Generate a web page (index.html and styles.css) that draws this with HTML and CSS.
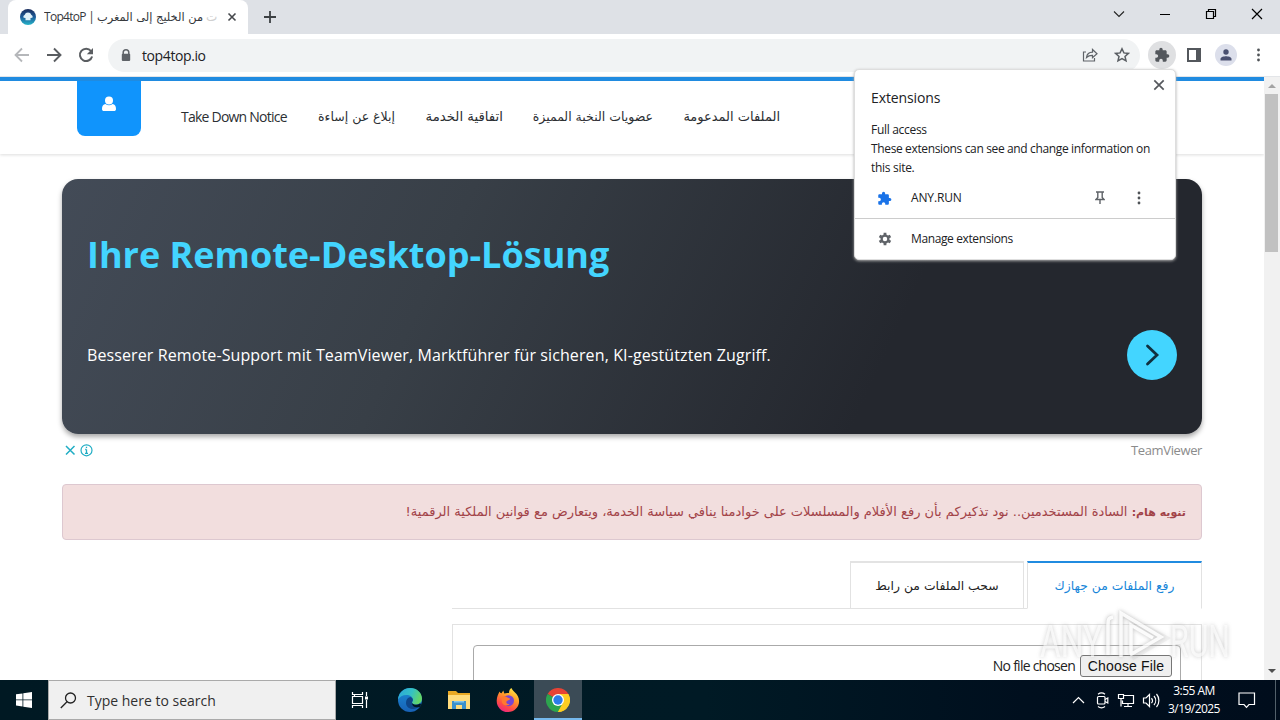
FILE: index.html
```html
<!DOCTYPE html>
<html lang="en">
<head>
<meta charset="utf-8">
<title>Top4toP</title>
<link rel="stylesheet" href="styles.css">
</head>
<body>
<div class="screen">
  <div class="tabstrip">
    <div class="tab">
      <svg class="favicon" width="16" height="16" viewBox="0 0 16 16"><defs><linearGradient id="fv" x1="0" y1="0" x2="0" y2="1"><stop offset="0" stop-color="#1b2c5c"/><stop offset=".5" stop-color="#1d5c9a"/><stop offset="1" stop-color="#27b5c9"/></linearGradient></defs><circle cx="8" cy="8" r="8" fill="url(#fv)"/><path d="M3.800 8.800a1.800 1.800 0 0 1 .8-2.900A3.600 3.600 0 0 1 11.400 5.900a1.800 1.800 0 0 1 .8 2.900L10.500 9v2.200h-5V9z" fill="#dff0f8"/></svg>
      <div class="tab-title"><span class="tab-latin">Top4toP |</span><span class="tab-arabic" dir="rtl">من الخليج إلى المغرب</span><span class="tab-fade">ت</span></div>
      <svg class="tab-close" width="10" height="10" viewBox="0 0 10 10"><path d="M1.500 1.500l7 7M8.500 1.500l-7 7" stroke="#45484c" stroke-width="1.600"/></svg>
    </div>
    <svg class="new-tab" width="12" height="12" viewBox="0 0 12 12"><path d="M6 0v12M0 6h12" stroke="#3c4043" stroke-width="1.800"/></svg>
    <div class="window-buttons">
      <svg width="46" height="28" viewBox="0 0 46 28"><path d="M18 11.500l5 5 5-5" fill="none" stroke="#222" stroke-width="1.100"/></svg>
      <svg width="46" height="28" viewBox="0 0 46 28"><path d="M18 14.500h10" stroke="#000"/></svg>
      <svg width="46" height="28" viewBox="0 0 46 28"><path d="M18.500 11.500h7v7h-7zM20.500 11.500v-2h7v7h-2" fill="none" stroke="#000" stroke-width="1.200"/></svg>
      <svg width="46" height="28" viewBox="0 0 46 28"><path d="M18 9l10 10M28 9L18 19" stroke="#000" stroke-width="1.200"/></svg>
    </div>
  </div>
  <div class="toolbar">
    <div class="nav-buttons">
      <svg width="16" height="16" viewBox="0 0 16 16"><path d="M15 8H2M8 1.500L1.500 8 8 14.500" fill="none" stroke="#b5b7ba" stroke-width="1.800"/></svg>
      <svg width="16" height="16" viewBox="0 0 16 16"><path d="M1 8h13M8 1.500L14.500 8 8 14.500" fill="none" stroke="#5a5d61" stroke-width="1.900"/></svg>
      <svg width="16" height="16" viewBox="0 0 16 16"><path d="M13 4a6.200 6.200 0 1 0 1.100 5.500" fill="none" stroke="#5a5d61" stroke-width="2"/><path d="M15 1v6.200H8.800z" fill="#5a5d61"/></svg>
    </div>
    <div class="omnibox">
      <svg class="lock" width="10" height="13" viewBox="0 0 10 13"><path d="M2.200 5V3.600a2.800 2.800 0 0 1 5.600 0V5" fill="none" stroke="#5f6368" stroke-width="1.500"/><rect x=".8" y="4.700" width="8.400" height="7.300" rx="1" fill="#5f6368"/></svg>
      <span class="url">top4top.io</span>
      <svg class="share" width="16" height="16" viewBox="0 0 16 16"><path d="M4 5H1.500v9h11v-3" fill="none" stroke="#5f6368" stroke-width="1.200"/><path d="M4.500 10.500C5 7 7 5.300 10.500 5.200V2.500L15 6.700l-4.500 4V8.300C8 8.200 6.200 8.800 4.500 10.500z" fill="none" stroke="#5f6368" stroke-width="1.200"/></svg>
      <svg class="star" width="16" height="16" viewBox="0 0 16 16"><path d="M8 1.800l1.900 4.100 4.500.5-3.400 3 1 4.400L8 11.500l-4 2.300 1-4.400-3.400-3 4.500-.5z" fill="none" stroke="#5a5e63" stroke-width="1.500"/></svg>
    </div>
    <div class="tools">
      <span class="round gray"><svg width="16" height="16" viewBox="0 0 24 24"><path fill="#53575c" d="M20.500 11H19V7c0-1.100-.9-2-2-2h-4V3.500a2.500 2.500 0 0 0-5 0V5H4c-1.100 0-2 .9-2 2v3.800h1.500a2.700 2.700 0 0 1 0 5.400H2V20c0 1.100.9 2 2 2h3.800v-1.500a2.700 2.700 0 0 1 5.400 0V22H17c1.100 0 2-.9 2-2v-4h1.500a2.500 2.500 0 0 0 0-5z"/></svg></span>
      <svg width="16" height="16" viewBox="0 0 16 16"><path d="M2 2h12v12H2z" fill="none" stroke="#53575c" stroke-width="2"/><path d="M10 2h4v12h-4z" fill="#53575c"/></svg>
      <span class="round small"><svg width="14" height="14" viewBox="0 0 14 14"><circle cx="7" cy="4" r="2.700" fill="#4a5070"/><path d="M1.500 12.500V11c0-2 3.500-2.700 5.500-2.700s5.500.7 5.500 2.700v1.500z" fill="#4a5070"/></svg></span>
      <svg width="6" height="16" viewBox="0 0 6 16"><g fill="#4f5357"><circle cx="2.500" cy="3" r="1.400"/><circle cx="2.500" cy="8" r="1.400"/><circle cx="2.500" cy="13" r="1.400"/></g></svg>
    </div>
  </div>

  <div class="viewport">
    <div class="page">
      <div class="header">
        <div class="user"><svg width="16" height="16" viewBox="0 0 16 16"><circle cx="8" cy="4.500" r="4" fill="#fff"/><path d="M1 13c0-3 1.200-4.600 3.500-5 2 1.600 5 1.600 7 0 2.300.4 3.500 2 3.500 5 0 1.400-.8 2-2 2H3c-1.200 0-2-.6-2-2z" fill="#fff"/></svg></div>
        <div class="menu">
          <span class="m m1">Take Down Notice</span>
          <span class="m m2" dir="rtl">إبلاغ عن إساءة</span>
          <span class="m m3" dir="rtl">اتفاقية الخدمة</span>
          <span class="m m4" dir="rtl">عضويات النخبة المميزة</span>
          <span class="m m5" dir="rtl">الملفات المدعومة</span>
        </div>
      </div>
      <div class="ad">
        <div class="ad-title">Ihre Remote-Desktop-Lösung</div>
        <div class="ad-row">
          <span class="ad-text">Besserer Remote-Support mit TeamViewer, Marktführer für sicheren, KI-gestützten Zugriff.</span>
          <span class="ad-go"><svg width="50" height="50" viewBox="0 0 50 50"><path d="M20.500 16l9.500 9-9.500 9" fill="none" stroke="#10303f" stroke-width="2.800" stroke-linecap="round"/></svg></span>
        </div>
      </div>
      <div class="ad-foot">
        <svg width="30" height="14" viewBox="0 0 30 14"><path d="M2 3l8.500 8.500M10.500 3L2 11.500" stroke="#20adc4" stroke-width="1.500"/><circle cx="22.500" cy="7.300" r="5.500" fill="none" stroke="#20adc4" stroke-width="1.200"/><path d="M22.500 6.500v4M21.200 6.500h1.300M21 10.300h3M22.500 3.800v1.300" stroke="#20adc4" stroke-width="1.300"/></svg>
        <span class="sponsor">TeamViewer</span>
      </div>
      <div class="notice" dir="rtl"><span class="notice-text"><b>تنويه هام:</b> السادة المستخدمين.. نود تذكيركم بأن رفع الأفلام والمسلسلات على خوادمنا ينافي سياسة الخدمة، ويتعارض مع قوانين الملكية الرقمية!</span></div>
      <div class="page-tabs" dir="rtl">
        <div class="ptab active"><span>رفع الملفات من جهازك</span></div>
        <div class="ptab"><span>سحب الملفات من رابط</span></div>
      </div>
      <div class="panel">
        <div class="filebox"><span class="nofile">No file chosen</span><span class="choose">Choose File</span></div>
      </div>
    </div>
    <div class="scrollbar">
      <svg width="16" height="17" viewBox="0 0 16 17"><path d="M4 11l4-4 4 4z" fill="#a3a3a3"/></svg>
      <div class="thumb"></div>
      <svg class="down" width="16" height="17" viewBox="0 0 16 17"><path d="M4 6l4 4 4-4z" fill="#505050"/></svg>
    </div>
  </div>

  <div class="taskbar">
    <div class="start"><svg width="16" height="16" viewBox="0 0 16 16"><path d="M0 2.300l6.500-.9v6.100H0zM7.300 1.300L16 0v7.500H7.300zM0 8.300h6.500v6.200L0 13.600zM7.300 8.300H16V16l-8.700-1.300z" fill="#fff"/></svg></div>
    <div class="search"><svg width="17" height="17" viewBox="0 0 17 17"><circle cx="10.500" cy="6" r="5" fill="none" stroke="#222" stroke-width="1.300"/><path d="M7 9.800L.8 16" stroke="#222" stroke-width="1.300"/></svg><span>Type here to search</span></div>
    <div class="app first"><svg width="18" height="16" viewBox="0 0 18 16"><path d="M1.500 0v2.500h10V0M3.500 2.500v2M1.500 4.500h10v7h-10zM1.500 16v-2.500h10V16M15.500 0v4M15.500 8v8" fill="none" stroke="#fff" stroke-width="1.200"/><rect x="14" y="4.500" width="3" height="3" fill="#fff"/></svg></div>
    <div class="app gap"><svg width="24" height="24" viewBox="0 0 24 24"><defs><linearGradient id="e1" x1="0" y1="0" x2="1" y2=".3"><stop offset="0" stop-color="#2aa6dc"/><stop offset=".6" stop-color="#35c1c4"/><stop offset="1" stop-color="#62d56a"/></linearGradient><linearGradient id="e2" x1="0" y1="0" x2="0" y2="1"><stop offset="0" stop-color="#1b8bd4"/><stop offset="1" stop-color="#1761b6"/></linearGradient></defs><circle cx="12" cy="12" r="12" fill="url(#e2)"/><path d="M0 11.500C.7 4.500 6 0 12.300 0 19 0 24 5 24 10.500c0 4-3 6.200-6.200 6.200-2.800 0-4.400-1.200-3.600-2.500.7-1 .7-1.700.7-2.500C14.800 9 12 7 8.500 7 4.500 7 1.500 9 0 11.500z" fill="url(#e1)"/><path d="M8 15c0-3 1.500-5.500 4.200-6 1.800.5 2.800 1.700 2.700 3-.1 1-1.500 1.800-.7 3.200 1 1.800 4.800 2.500 7.800.3 1 0 1 1 .3 2C20 20 17 21.500 14 21 10.500 20.500 8 18 8 15z" fill="#0e4689"/><path d="M14.200 15c1 2 5 2.600 8 .5l1 1.200-1.500 2.300c-4 1-8-.5-7.500-4z" fill="#001824"/></svg></div>
    <div class="app"><svg width="22" height="20" viewBox="0 0 22 20"><path d="M0 1h8l2 2h12v16H0z" fill="#e9a924"/><path d="M0 5h22v14H0z" fill="#ffdc7c"/><path d="M4 19v-8h14v8h-4v-4H8v4z" fill="#3b91cc"/><path d="M6 11h10v1.500H6z" fill="#83c5ea"/></svg></div>
    <div class="app"><svg width="24" height="24" viewBox="0 0 24 24"><defs><linearGradient id="ff" x1=".8" y1="0" x2=".3" y2="1"><stop offset="0" stop-color="#fff04a"/><stop offset=".4" stop-color="#ff9a29"/><stop offset=".75" stop-color="#ff4b45"/><stop offset="1" stop-color="#ed2680"/></linearGradient></defs><path d="M3.500 3.500C4 4.500 4.500 5 5.500 5.200L7.300 2.500l1 3c1.500-.7 3-.7 4.700-.5C13 2.500 14 .8 15.500 0c.8 3 5 5 6.500 8.500C25.500 16 20 24 12 24 5 24 .5 18.500.7 12.500.9 9 2 6.500 3.500 3.500z" fill="url(#ff)"/><circle cx="12.500" cy="12.700" r="5.500" fill="#7545d3"/><path d="M5.500 9c3-1.500 5 0 6.500.8 1 .6 2.500.3 2 1.500-.5.900-2.500 1-3.500 2.200-.7 1.500 1 3 3 2.500-2 2.500-6.500 1.500-7.500-1.500z" fill="#ff792f"/></svg></div>
    <div class="app current"><svg width="24" height="24" viewBox="0 0 24 24"><path d="M12 12L1.600 6A12 12 0 0 1 22.400 6z" fill="#e64335"/><path d="M12 12L12 24A12 12 0 0 1 1.600 6z" fill="#2da44e"/><path d="M12 12L12 24A12 12 0 0 0 22.400 6H12z" fill="#fdcd22"/><path d="M12 6.500L6.800 15 12 24l5-9z" fill="#2da44e"/><path d="M17 15l-5 9A12 12 0 0 0 22.400 6.500H12z" fill="#fdcd22"/><circle cx="12" cy="12" r="6" fill="#fff"/><circle cx="12" cy="12" r="4.700" fill="#2b7ce9"/></svg></div>
    <div class="tray">
      <svg width="92" height="20" viewBox="0 0 92 20" fill="none" stroke="#fff" stroke-width="1.200"><path d="M1 13l5.500-5.500L12 13"/><rect x="25.500" y="6.500" width="7.500" height="7.500" rx="1"/><path d="M33 9.500l2.800-1.500v5L33 11.500M26 4.200c2-1.500 5-1.500 7 0M26 16.500c2 1.500 5 1.500 7 0"/><path d="M51 5.500h10.500v8H50.500v-3M56 13.500v3M52 16.500h8M46.500 4.500h5v4h-5zM49 8.500v8"/><path d="M71.500 8h2.500l3.500-3.500v12L74 13h-2.500zM79.500 8a4 4 0 0 1 0 5M82 6a7 7 0 0 1 0 9M84.500 4a10 10 0 0 1 0 13"/></svg>
      <div class="clock"><span class="time">3:55 AM</span><span class="date">3/19/2025</span></div>
      <svg class="action" width="18" height="17" viewBox="0 0 18 17"><path d="M1 1h15.500v11.500H11l-2.500 2.800L6 12.500H1z" fill="none" stroke="#fff" stroke-width="1.200"/></svg>
      <div class="peek"></div>
    </div>
  </div>

  <div class="popup">
    <svg class="popup-close" width="12" height="12" viewBox="0 0 12 12"><path d="M1.300 1.300l9.400 9.400M10.700 1.300l-9.400 9.400" stroke="#55585d" stroke-width="1.700"/></svg>
    <div class="popup-title">Extensions</div>
    <div class="popup-text"><span class="full">Full access</span><br><span class="l2">These extensions can see and change information on</span><br><span class="l3">this site.</span></div>
    <div class="ext-row">
      <svg width="15" height="15" viewBox="0 0 24 24"><path fill="#1a73e8" d="M20.500 11H19V7c0-1.100-.9-2-2-2h-4V3.500a2.500 2.500 0 0 0-5 0V5H4c-1.100 0-2 .9-2 2v3.800h1.500a2.700 2.700 0 0 1 0 5.400H2V20c0 1.100.9 2 2 2h3.800v-1.500a2.700 2.700 0 0 1 5.400 0V22H17c1.100 0 2-.9 2-2v-4h1.500a2.500 2.500 0 0 0 0-5z"/></svg>
      <span class="ext-name">ANY.RUN</span>
      <svg class="pin" width="10" height="14" viewBox="0 0 10 14"><path d="M1 1h8M2.800 1v5.500L1 8.500h8L7.200 6.500V1M5 8.500V13" fill="none" stroke="#5f6368" stroke-width="1.400"/></svg>
      <svg width="6" height="14" viewBox="0 0 6 14"><g fill="#4f5357"><circle cx="3" cy="2" r="1.400"/><circle cx="3" cy="7" r="1.400"/><circle cx="3" cy="12" r="1.400"/></g></svg>
    </div>
    <div class="manage-row">
      <svg width="14" height="14" viewBox="0 0 14 14"><circle cx="7" cy="7" r="3.400" fill="none" stroke="#5f6368" stroke-width="2.300"/><path d="M7 .7v2.500M7 10.800v2.500M1.500 3.900l2.200 1.200M10.300 8.900l2.200 1.200M1.500 10.100l2.200-1.200M10.300 5.100l2.200-1.200" stroke="#5f6368" stroke-width="2.800"/></svg>
      <span class="manage">Manage extensions</span>
    </div>
  </div>

  <svg class="watermark" width="200" height="60" viewBox="0 0 200 60">
    <g fill="none" stroke="#b9b9b9" stroke-opacity=".2" stroke-width="5"><path d="M84 52V9l45 24-34 20M76 12c-5 1-5 3-5 8v30"/></g>
    <g fill="none" stroke="#fff" stroke-opacity=".9" stroke-width="3.500"><path d="M84 52V8l40 24-31 18M94 48V20l22 13M76 12c-5 1-5 3-5 8v30"/></g>
    <text class="wm" x="3" y="52" textLength="62" lengthAdjust="spacingAndGlyphs">ANY</text>
    <text class="wm" x="133" y="52" textLength="60" lengthAdjust="spacingAndGlyphs">RUN</text>
  </svg>
</div>
</body>
</html>
```
FILE: styles.css
```css
* { box-sizing: border-box; }
body { margin: 0; background: #fff; font-family: "Open Sans", "DejaVu Sans", sans-serif; }
svg { display: block; flex: none; }
.screen { width: 1280px; height: 720px; overflow: hidden; position: relative; display: flex; flex-direction: column; }
span { white-space: nowrap; }

.tabstrip { height: 34px; background: #dee1e6; display: flex; padding-left: 8px; flex: none; }
.tab { width: 240px; height: 34px; background: #fff; border-radius: 8px 8px 0 0; display: flex; align-items: center; padding-left: 12px; }
.tab-title { display: flex; width: 178px; margin-left: 8px; font-size: 12px; color: #35383c; height: 18px; line-height: 18px; overflow: hidden; }
.tab-latin { width: 53px; letter-spacing: -0.7px; }
.tab-arabic { width: 106px; font-size: 11.4px; font-family: "DejaVu Sans", sans-serif; }
.tab-fade { color: #d0d0d0; margin-left: 3px; }
.tab-close { margin-left: 5px; }
.new-tab { margin: 11px 0 0 16px; }
.window-buttons { display: flex; margin-left: auto; }

.toolbar { height: 43px; background: #fff; border-bottom: 1px solid #e3e5e8; display: flex; align-items: center; flex: none; }
.nav-buttons { display: flex; gap: 16px; padding-left: 14px; width: 108px; }
.omnibox { width: 1032px; height: 33px; border-radius: 17px; background: #f1f3f4; display: flex; align-items: center; padding: 0 10px 0 13px; }
.url { font-size: 14px; color: #202124; margin-left: 11px; letter-spacing: -0.4px; }
.share { margin-left: auto; }
.star { margin-left: 16px; }
.tools { display: flex; align-items: center; padding-left: 8px; gap: 10px; }
.round { border-radius: 50%; display: flex; align-items: center; justify-content: center; }
.gray { width: 28px; height: 28px; background: #dfe0e2; }
.small { width: 22px; height: 22px; background: #dcdfeb; margin-left: 3px; }
.tools > svg:last-child { margin-left: 9px; }

.viewport { height: 603px; display: flex; flex: none; }
.page { width: 1264px; overflow: hidden; padding: 0 62px; }
.header { margin: 0 -62px; height: 77px; border-top: 4px solid #208be0; display: flex; padding-left: 77px; box-shadow: 0 1px 3px #ddd; }
.user { width: 64px; height: 55px; border-radius: 0 0 8px 8px; background: #1094fc; display: flex; justify-content: center; padding-top: 15px; }
.menu { display: flex; gap: 30px; padding: 26px 0 0 40px; color: #2c2f33; line-height: 19px; }
.m { font-family: "DejaVu Sans", sans-serif; font-size: 12.5px; }
.m1 { width: 106px; font-family: "Open Sans", sans-serif; font-size: 14px; letter-spacing: -0.77px; }
.m2, .m3 { width: 78px; }
.m3 { font-size: 13.3px; }
.m4 { width: 120px; }
.m5 { width: 97px; font-size: 13px; }

.ad { margin-top: 25px; height: 255px; border-radius: 16px; background: linear-gradient(115deg, #434b57 0%, #383f47 33%, #24272e 72%, #24272e 100%); box-shadow: 0 3px 5px #aaa; padding: 50px 25px 0; }
.ad-title { font-weight: 700; font-size: 36px; line-height: 52px; color: #43d5ff; }
.ad-row { display: flex; justify-content: space-between; align-items: center; height: 50px; margin-top: 49px; }
.ad-text { color: #fff; font-size: 16px; letter-spacing: 0.11px; }
.ad-go { width: 50px; height: 50px; border-radius: 50%; background: #43d5ff; }
.ad-foot { height: 50px; display: flex; justify-content: space-between; padding: 9px 0 0 2px; }
.sponsor { color: #8b8b8b; font-size: 13px; line-height: 15px; letter-spacing: -0.38px; }
.notice { height: 56px; border: 1px solid #ddc8d0; border-radius: 4px; background: #f2dede; color: #a24348; font-family: "DejaVu Sans", sans-serif; font-size: 13px; line-height: 54px; padding-right: 15px; }
.notice b { font-weight: 700; font-size: 11px; }
.page-tabs { width: 750px; margin: 21px 0 0 390px; height: 48px; border-bottom: 1px solid #e2e2e2; display: flex; gap: 3px; font-family: "DejaVu Sans", sans-serif; font-size: 12.4px; }
.ptab { width: 174px; height: 48px; border: 1px solid #e2e2e2; border-top: 2px solid #e3e3e3; text-align: center; line-height: 45px; color: #222; }
.active { width: 175px; border-top-color: #208be0; border-bottom-color: #fff; color: #1685d9; }
.panel { width: 750px; margin: 15px 0 0 390px; height: 80px; border: 1px solid #e2e2e2; padding: 20px; }
.filebox { height: 60px; border: 1px solid #aaa; border-radius: 4px; display: flex; justify-content: flex-end; padding: 9px 8px 0 0; }
.nofile { font-size: 14px; line-height: 22px; color: #222; letter-spacing: -0.75px; margin-right: 5px; }
.choose { width: 92px; height: 22px; border: 1px solid #767676; border-radius: 3px; background: #efefef; color: #111; font: 14px/20px "Liberation Sans", sans-serif; letter-spacing: 0.15px; text-align: center; }
.scrollbar { width: 16px; background: #f1f1f1; display: flex; flex-direction: column; }
.thumb { height: 158px; margin: 0 2px 0 1px; background: #c1c1c1; }
.down { margin-top: auto; }

.taskbar { height: 40px; flex: none; background: linear-gradient(90deg, #001923 0%, #001a25 55%, #000f1e 80%, #000d1c 100%); display: flex; }
.start { width: 48px; display: flex; align-items: center; justify-content: center; }
.search { width: 288px; background: #f0f0f0; border: 1px solid #aaa; display: flex; align-items: center; padding-left: 11px; color: #303030; font-size: 14px; }
.search span { margin-left: 10px; letter-spacing: 0; }
.app { width: 49px; display: flex; align-items: center; justify-content: center; }
.first { width: 48px; }
.gap { margin-left: 2px; }
.current { width: 48px; background: #3b4b56; border-bottom: 2px solid #76b9ed; padding-top: 2px; margin-left: 1px; }
.app:nth-of-type(n+4):not(.current) { padding-right: 1px; }
.tray { margin-left: auto; display: flex; align-items: center; width: 208px; color: #fff; }
.clock { display: flex; flex-direction: column; align-items: center; width: 60px; font-size: 12px; line-height: 18px; letter-spacing: -0.55px; }
.action { margin-left: 14px; }
.peek { width: 1px; height: 40px; background: #52606a; margin-left: auto; margin-right: 4px; }

.popup { position: absolute; left: 854px; top: 69px; width: 322px; height: 191px; background: #fff; border: 1px solid #dedede; border-radius: 5px; box-shadow: 0 1px 3px #aaa; color: #202124; padding-top: 18px; }
.popup-close { position: absolute; right: 10px; top: 9px; }
.popup-title { font-size: 14px; line-height: 20px; padding-left: 16px; letter-spacing: -0.1px; }
.popup-text { padding: 12px 0 1px 16px; font-size: 12px; line-height: 19px; letter-spacing: -0.3px; }
.l2 { letter-spacing: -0.36px; }
.ext-row { height: 41px; border-bottom: 1px solid #ccc; display: flex; align-items: center; padding: 0 33px 0 22px; font-size: 12px; }
.ext-name { margin: -2px 0 0 19px; letter-spacing: -0.15px; }
.pin { margin: 0 31px 0 auto; }
.manage-row { height: 40px; display: flex; align-items: center; padding-left: 23px; font-size: 12px; }
.manage { margin: -1px 0 0 19px; letter-spacing: -0.38px; }

.watermark { position: absolute; left: 1037px; top: 605px; filter: drop-shadow(0 0 2px #aaa); opacity: 0.8; }
.wm { font: 400 44px "Roboto", sans-serif; fill: #fff; fill-opacity: 0.7; }
```
